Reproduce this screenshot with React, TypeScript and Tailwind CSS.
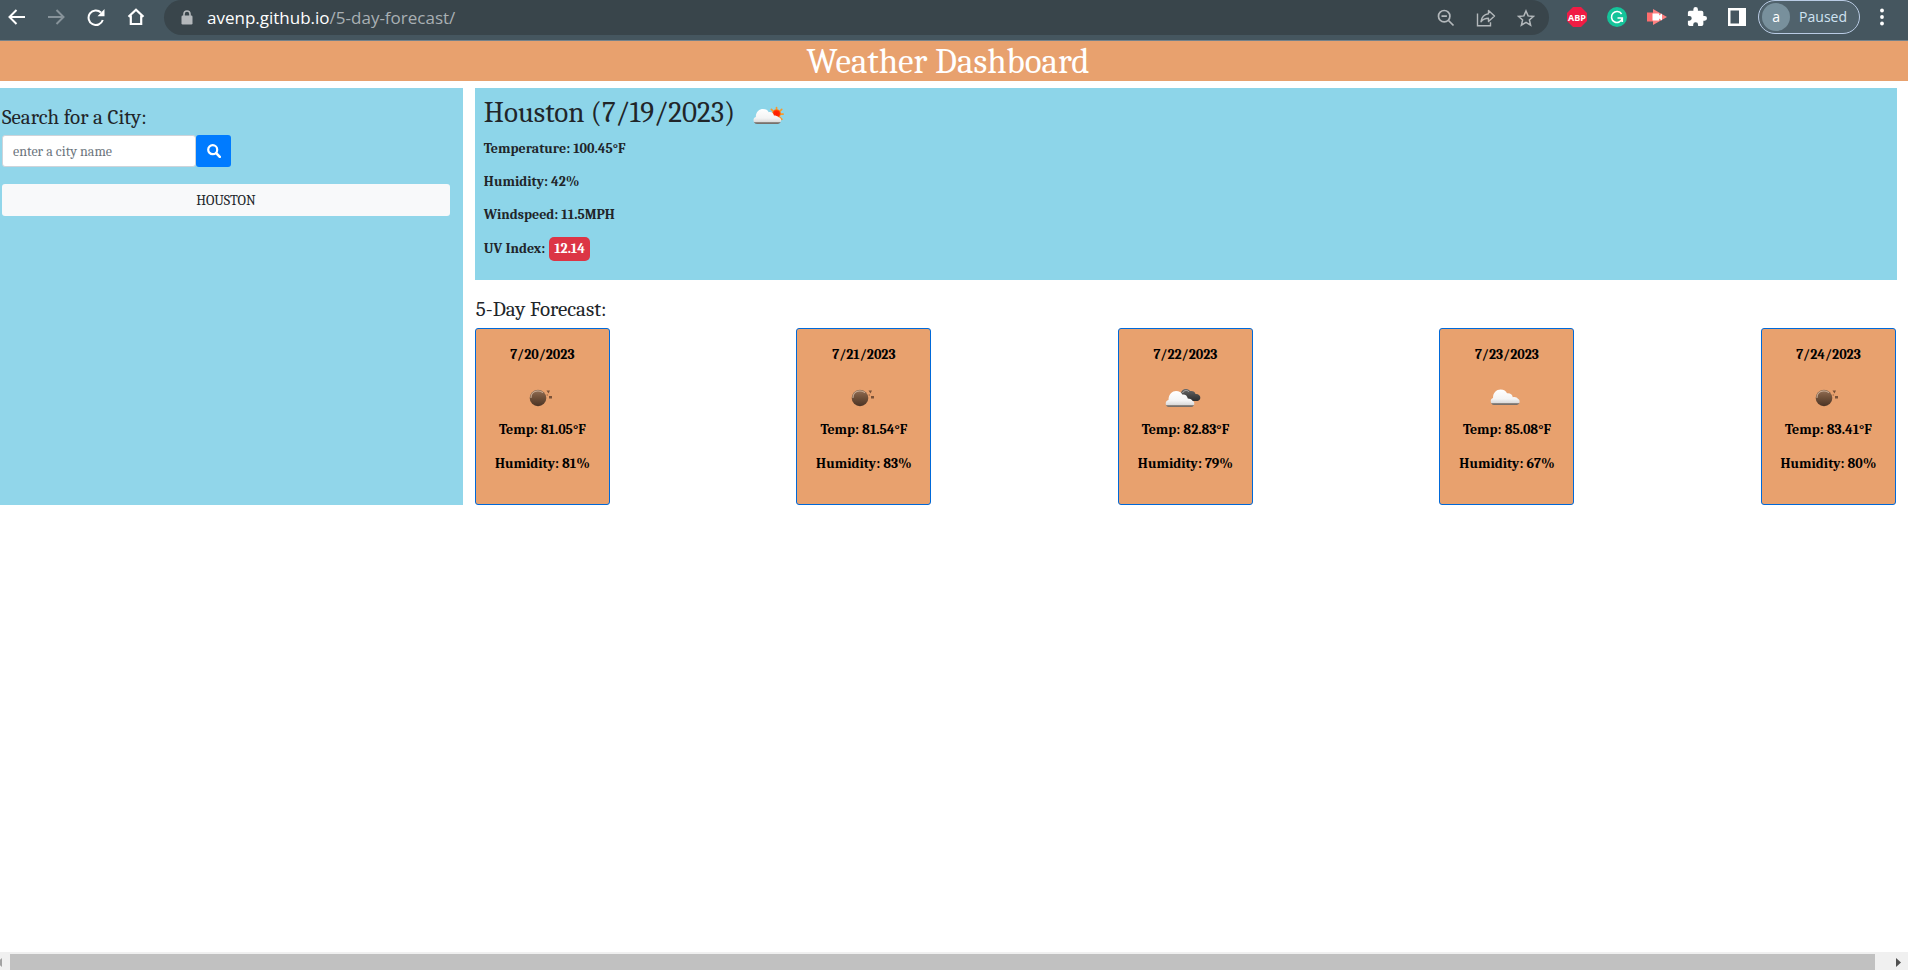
import { useState } from "react";

type Sky = "hail" | "broken" | "cloudy";

const forecast: { date: string; sky: Sky; temp: string; humidity: string }[] = [
  { date: "7/20/2023", sky: "hail", temp: "81.05", humidity: "81" },
  { date: "7/21/2023", sky: "hail", temp: "81.54", humidity: "83" },
  { date: "7/22/2023", sky: "broken", temp: "82.83", humidity: "79" },
  { date: "7/23/2023", sky: "cloudy", temp: "85.08", humidity: "67" },
  { date: "7/24/2023", sky: "hail", temp: "83.41", humidity: "80" },
];

function Gradients() {
  return (
    <svg className="absolute size-0" aria-hidden="true">
      <defs>
        <linearGradient id="cloud" x1="0" y1="0" x2="0" y2="1">
          <stop offset="0" stopColor="#ffffff" />
          <stop offset="0.6" stopColor="#f4f4f4" />
          <stop offset="0.85" stopColor="#dcdcdc" />
          <stop offset="0.9" stopColor="#8d8782" />
          <stop offset="1" stopColor="#6d6560" />
        </linearGradient>
        <linearGradient id="dark" x1="0" y1="0" x2="0" y2="1">
          <stop offset="0" stopColor="#6a6a6a" />
          <stop offset="0.5" stopColor="#484848" />
          <stop offset="1" stopColor="#2e2e2e" />
        </linearGradient>
        <linearGradient id="moon" x1="0" y1="0" x2="0" y2="1">
          <stop offset="0" stopColor="#94745a" />
          <stop offset="0.3" stopColor="#7d5b43" />
          <stop offset="0.5" stopColor="#6e4f38" />
          <stop offset="1" stopColor="#4a3325" />
        </linearGradient>
        <radialGradient id="sun">
          <stop offset="0" stopColor="#ff1a00" />
          <stop offset="0.65" stopColor="#ff2a00" />
          <stop offset="1" stopColor="#ff8a1e" />
        </radialGradient>
      </defs>
    </svg>
  );
}

function PartlyCloudy() {
  return (
    <svg viewBox="0 0 34 20" className="h-[19px] w-8" aria-hidden="true">
      <g stroke="#f79a2b" strokeWidth="1.8" strokeLinecap="round">
        <path d="M25 1.500v3M19.500 3.500l2 2M30.500 3.500l-2 2M18 9h3M29 8.500h3M28.500 12l2.200 2M25 12v3" />
      </g>
      <circle cx="25" cy="8" r="4.700" fill="url(#sun)" />
      <path d="M4.500 19C-.5 19-.5 12 3 11.500 3 6 7 3.200 10.500 3.200c3.500 0 5 1.300 6.200 3.300 3.300-.5 5.100 1.200 5.500 3.600 2 0 3.800.6 5.300 1.900 3.500.5 3 6.500-1 7z" fill="url(#cloud)" />
    </svg>
  );
}

function Hail() {
  return (
    <svg viewBox="0 0 24 20" className="h-5 w-6" aria-hidden="true">
      <circle cx="10" cy="10" r="8.300" fill="url(#moon)" />
      <path d="M3 9.500C3 5.500 6 3.200 9.500 3c2-.1 3.800.4 5 1.400" fill="none" stroke="#d9bda6" strokeWidth="1.200" strokeLinecap="round" opacity=".8" />
      <path d="M18.500 2.500h3.500l-1.500 3zM21 8h3v2.500h-3z" fill="#7b5238" />
      <circle cx="19.300" cy="7" r=".8" fill="#a5714d" />
    </svg>
  );
}

function Broken() {
  return (
    <svg viewBox="0 0 36 20" className="h-5 w-9" aria-hidden="true">
      <path d="M16 6c0-5 6-6.500 9-3 3-.5 5 .5 5.500 3 5.500-.5 6.500 6 2 7H18z" fill="url(#dark)" />
      <path d="M17.500 5C19 2 22.500 1.700 24 4" fill="none" stroke="#aaa" strokeWidth="1" />
      <path d="M4 19C-.3 19-.3 12.500 3.500 12 3.500 6 7.500 3 11 3c3.300 0 5.300 1.300 6.300 3.500 3-.4 5 1.300 5.500 4 2 0 3.700.8 4.700 2.200 3 1 2 6-1 6.300z" fill="url(#cloud)" />
    </svg>
  );
}

function Cloudy() {
  return (
    <svg viewBox="0 0 30 20" className="h-5 w-[30px]" aria-hidden="true">
      <path d="M4 17C0 17-.3 10.500 3 10 3 4.500 6.500 1.500 10.500 1.500c3.500 0 5.500 1.500 6.500 3.800 3.200-.4 5.300 1.200 5.800 4 2-.8 4.500.2 5 1.500 2.700.8 2.500 5.700-1 6.200z" fill="url(#cloud)" />
    </svg>
  );
}

function SkyIcon({ sky }: { sky: Sky }) {
  if (sky === "hail") return <Hail />;
  if (sky === "broken") return <Broken />;
  return <Cloudy />;
}

function BrowserBar() {
  const tool = "flex h-[34px] w-10 items-center justify-center";
  return (
    <header className="flex h-[41px] items-start border-b border-[#75828a] bg-[#45565f] font-['Open_Sans',sans-serif] text-white">
      <nav className="flex shrink-0 pr-1" aria-label="Browser navigation">
        <button aria-label="Back" className="flex h-[34px] w-9 items-center pl-2">
          <svg viewBox="0 0 17 16" className="h-4 w-[17px]" fill="none" stroke="currentColor" strokeWidth="2"><path d="M17 8H1.500M8.500 1l-7 7 7 7" /></svg>
        </button>
        <button aria-label="Forward" className={`${tool} text-[#87939a]`}>
          <svg viewBox="0 0 17 16" className="h-4 w-[17px]" fill="none" stroke="currentColor" strokeWidth="2"><path d="M0 8h15.500M8.500 1l7 7-7 7" /></svg>
        </button>
        <button aria-label="Reload" className={tool}>
          <svg viewBox="0 0 18 17" className="h-[17px] w-[18px]"><path d="M15.800 11A7.300 7.300 0 1 1 14 3.500" fill="none" stroke="currentColor" strokeWidth="2" /><path d="M17.500 0v7.200H10.500z" fill="currentColor" /></svg>
        </button>
        <button aria-label="Home" className={tool}>
          <svg viewBox="0 0 18 18" className="size-[18px]" fill="none" stroke="currentColor" strokeWidth="2.200"><path d="M1.500 8.800L9 1.700l7.500 7.100M3.800 7.500V16h10.400V7.500" /></svg>
        </button>
      </nav>
      <div className="ml-1 flex h-[35px] min-w-0 flex-1 items-center rounded-full bg-[#39454b] pr-[3px] pl-[17px]">
        <svg viewBox="0 0 12 15" className="h-[15px] w-3 shrink-0 text-[#b4b8bb]"><path d="M3 6V4a3 3 0 0 1 6 0v2" fill="none" stroke="currentColor" strokeWidth="1.600" /><rect x="0.500" y="5.500" width="11" height="9" rx="1.200" fill="currentColor" /></svg>
        <p className="ml-[14px] min-w-0 flex-1 truncate text-[17px] leading-6">
          avenp.github.io<span className="text-[#a9b0b4]">/5-day-forecast/</span>
        </p>
        <div className="flex text-[#b3b8bb]">
          <button aria-label="Zoom" className={tool}>
            <svg viewBox="0 0 18 18" className="size-[18px]" fill="none" stroke="currentColor" strokeWidth="1.700"><circle cx="7.200" cy="7.200" r="5.700" /><path d="M11.500 11.500l5 5M4.500 7.200h5.400" /></svg>
          </button>
          <button aria-label="Share" className={tool}>
            <svg viewBox="0 0 20 18" className="h-[18px] w-5" fill="none" stroke="currentColor" strokeWidth="1.400"><path d="M1.500 4.500v12.300h13v-3.500" /><path d="M12.500 1.500l6 5.500-6 5.500V9.300c-3.500 0-5.500.8-7.500 3.400.5-4.300 3-7.400 7.500-8z" strokeLinejoin="round" /></svg>
          </button>
          <button aria-label="Bookmark" className={tool}>
            <svg viewBox="0 0 18 18" className="size-[18px]" fill="none" stroke="currentColor" strokeWidth="1.500"><path d="M9 2l2.100 4.900 5.300.5-4 3.500 1.200 5.200L9 13.300l-4.600 2.800 1.200-5.200-4-3.500 5.300-.5z" /></svg>
          </button>
        </div>
      </div>
      <div className="ml-2 flex shrink-0 items-center">
        <button aria-label="ABP" className={tool}>
          <svg viewBox="0 0 20 20" className="size-5"><path d="M6 0h8l6 6v8l-6 6H6l-6-6V6z" fill="#f01c44" /><text x="10" y="13.500" textAnchor="middle" fontSize="9" fontWeight="700" fill="#fff">ABP</text></svg>
        </button>
        <button aria-label="Grammar" className={tool}>
          <svg viewBox="0 0 20 20" className="size-5"><circle cx="10" cy="10" r="10" fill="#15c39a" /><path d="M14.600 7A5.500 5.500 0 1 0 15.300 11.500M10.500 11h4.800v4" fill="none" stroke="#fff" strokeWidth="1.600" /></svg>
        </button>
        <button aria-label="Recorder" className={tool}>
          <svg viewBox="0 0 20 18" className="h-[18px] w-5"><path d="M0 4.500h8v9H0z" fill="#ff6d6d" /><path d="M6 1l14 8-14 8z" fill="#ff8080" /><path d="M5.500 5.500h6.500v2l3-2v7l-3-2v2H5.500z" fill="#fff" /></svg>
        </button>
        <button aria-label="Extensions" className={tool}>
          <svg viewBox="1 1 22 22" className="size-5" fill="currentColor"><path d="M20.500 11H19V7a2 2 0 0 0-2-2h-4V3.500a2.500 2.500 0 0 0-5 0V5H4a2 2 0 0 0-2 2v3.800h1.500a2.700 2.700 0 0 1 0 5.400H2V20a2 2 0 0 0 2 2h3.800v-1.500a2.700 2.700 0 0 1 5.400 0V22H17a2 2 0 0 0 2-2v-4h1.500a2.500 2.500 0 0 0 0-5z" /></svg>
        </button>
        <button aria-label="Side panel" className={tool}>
          <svg viewBox="0 0 18 18" className="size-[18px]"><path fillRule="evenodd" d="M0 0h18v18H0zM2.500 2.500v13H11v-13z" fill="currentColor" /></svg>
        </button>
        <button className="ml-px flex h-[34px] items-center rounded-full border border-[#b9cbe4] bg-[#50626c] pr-3 pl-[3px] text-[#cfe3f2]">
          <span className="flex size-7 items-center justify-center rounded-full bg-[#78909c] text-sm text-white">a</span>
          <span className="ml-[9px] text-sm leading-5">Paused</span>
        </button>
        <button aria-label="Menu" className="flex h-[34px] w-12 items-center justify-center pr-1">
          <svg viewBox="0 0 4 18" className="h-[18px] w-1" fill="currentColor"><circle cx="2" cy="2.500" r="1.900" /><circle cx="2" cy="9" r="1.900" /><circle cx="2" cy="15.500" r="1.900" /></svg>
        </button>
      </div>
    </header>
  );
}

export default function App() {
  const [city, setCity] = useState("");
  return (
    <div className="flex min-h-screen flex-col bg-white font-[Cambria,Caladea,'Liberation_Serif',serif] text-[#212529]">
      <Gradients />
      <BrowserBar />
      <h1 className="bg-[#e8a16e] pt-[2px] pr-3 text-center text-[35px] leading-[38px] text-white">Weather Dashboard</h1>
      <main className="mt-[7px] flex flex-1 items-start">
        <div className="flex min-w-0 flex-1 gap-3 pr-[11px]">
          <aside className="w-[24.4%] shrink-0 bg-[#91d6ea] pt-4 pr-[13px] pl-[2px]">
            <label htmlFor="city" className="block text-[21px] leading-[26px]">Search for a City:</label>
            <form className="mt-[5px] flex" onSubmit={(e) => e.preventDefault()}>
              <input id="city" value={city} onChange={(e) => setCity(e.target.value)} placeholder="enter a city name" className="h-8 w-[194px] rounded-[3px] border border-[#ced4da] bg-white px-[10px] text-[14px] placeholder:text-[#6c757d]" />
              <button aria-label="Search" className="flex h-8 w-[35px] items-center justify-center rounded-[3px] bg-[#007bff] text-white">
                <svg viewBox="0 0 14 14" className="size-[14px]" fill="none" stroke="currentColor"><circle cx="5.700" cy="5.700" r="4.500" strokeWidth="2.200" /><path d="M9.200 9.200l3.600 3.600" strokeWidth="2.600" strokeLinecap="round" /></svg>
              </button>
            </form>
            <button className="mt-[17px] h-8 w-full rounded-[3px] bg-[#f8f9fa] text-[14px]">HOUSTON</button>
          </aside>
          <div className="min-w-0 flex-1">
            <section className="h-48 bg-[#8dd5e9] px-[9px] pt-[9px]">
              <h2 className="flex items-center text-[29px] leading-8">
                Houston (7/19/2023)
                <span className="ml-[18px] pt-1"><PartlyCloudy /></span>
              </h2>
              <div className="mt-[10px] flex flex-col gap-[13px] text-[14px] leading-5 font-bold">
                <p>Temperature: 100.45°F</p>
                <p>Humidity: 42%</p>
                <p>Windspeed: 11.5MPH</p>
                <p className="-mt-px flex items-center">UV Index: <span className="ml-1 rounded-[5px] bg-[#dc3545] px-[5px] py-[2px] text-white">12.14</span></p>
              </div>
            </section>
            <section>
              <h3 className="mt-[15px] mb-[5px] pl-px text-[21px] leading-7">5-Day Forecast:</h3>
              <div className="flex justify-between pr-px">
                {forecast.map((day) => (
                  <article key={day.date} className="flex h-[177px] w-[135px] flex-col items-center rounded-[3px] border border-[#0069d9] bg-[#e8a16e] pt-4 text-[14px] leading-5 font-bold text-black">
                    <p>{day.date}</p>
                    <div className="mt-[23px] mb-3 pr-1"><SkyIcon sky={day.sky} /></div>
                    <p>Temp: {day.temp}°F</p>
                    <p className="mt-[14px]">Humidity: {day.humidity}%</p>
                  </article>
                ))}
              </div>
            </section>
          </div>
        </div>
      </main>
      <footer className="flex h-[18px] items-end bg-[#f0f0f0]" aria-hidden="true">
        <svg viewBox="0 0 10 16" className="h-4 w-[10px]"><path d="M2 4v9L-3 8.500z" fill="#a3a3a3" /></svg>
        <div className="h-4 flex-1 bg-[#c1c1c1]" />
        <svg viewBox="0 0 33 16" className="h-4 w-[33px]"><path d="M21 4v9l5-4.500z" fill="#505050" /></svg>
      </footer>
    </div>
  );
}
